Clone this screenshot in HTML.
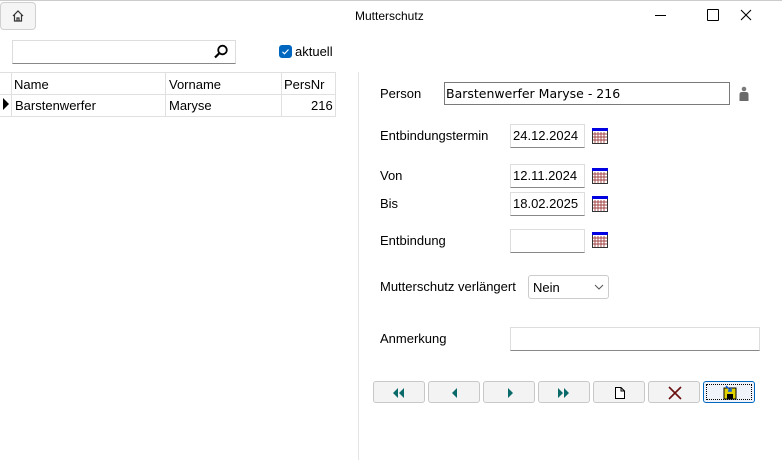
<!DOCTYPE html>
<html><head><style>
body{margin:0;width:782px;height:460px;background:#fff;font-family:"Liberation Sans",sans-serif;font-size:13px;color:#000;position:relative;overflow:hidden}
.a{position:absolute}
.lbl{position:absolute;font-size:13px}
.tb{position:absolute;border:1px solid #ddd;border-bottom:1px solid #888;background:#fff;box-sizing:border-box;font-size:13px;padding:3px 2px}
.cal{position:absolute;width:16px;height:16px}
.btn{position:absolute;top:381px;width:52px;height:22px;border:1px solid #c8c8c8;border-radius:3px;background:#f3f3f3;box-sizing:border-box}
.btn svg{position:absolute;left:0;top:0}
</style></head><body>
<div class="a" style="left:0;top:0;width:782px;height:1px;background:#ccc"></div>
<div class="a" style="left:0;top:2px;width:36px;height:28px;border:1px solid #d0d0d0;border-radius:4px;background:#f5f5f5;box-sizing:border-box"></div>
<svg class="a" style="left:11px;top:9px" width="14" height="14" viewBox="0 0 14 14"><path d="M2 7 L7 2 L12 7 M3.5 5.5 V12 H10.5 V5.5 M6 12 V9 H8 V12" fill="none" stroke="#333" stroke-width="1.2"/></svg>
<div class="lbl" style="left:355px;top:9px;font-size:12px">Mutterschutz</div>
<div class="a" style="left:655px;top:15px;width:11px;height:1px;background:#000"></div>
<div class="a" style="left:707px;top:9px;width:10px;height:10px;border:1px solid #000;border-radius:1px"></div>
<svg class="a" style="left:740px;top:9px" width="12" height="12"><path d="M1 1L11 11M11 1L1 11" stroke="#000" stroke-width="1.1"/></svg>

<div class="a" style="left:12px;top:40px;width:224px;height:24px;border:1px solid #ddd;border-bottom:1px solid #888;box-sizing:border-box"></div>
<svg class="a" style="left:213px;top:44px" width="16" height="16"><circle cx="9.5" cy="6" r="4.3" fill="none" stroke="#000" stroke-width="1.8"/><path d="M6.5 9L2 13.5" stroke="#000" stroke-width="2.2"/></svg>
<div class="a" style="left:279px;top:45px;width:13px;height:13px;background:#0067c0;border-radius:3px"></div>
<svg class="a" style="left:279px;top:45px" width="13" height="13"><path d="M3.5 6.8L5.5 8.8L9.5 4.5" fill="none" stroke="#fff" stroke-width="1.1"/></svg>
<div class="lbl" style="left:295px;top:44px">aktuell</div>

<div class="a" style="left:0;top:72px;width:336px;height:44px;border-top:1px solid #e0e0e0"></div>
<div class="a" style="left:0;top:94px;width:336px;height:1px;background:#e0e0e0"></div>
<div class="a" style="left:0;top:116px;width:336px;height:1px;background:#e0e0e0"></div>
<div class="a" style="left:11px;top:72px;width:1px;height:44px;background:#e0e0e0"></div>
<div class="a" style="left:165px;top:72px;width:1px;height:44px;background:#e0e0e0"></div>
<div class="a" style="left:281px;top:72px;width:1px;height:44px;background:#e0e0e0"></div>
<div class="a" style="left:335px;top:72px;width:1px;height:44px;background:#e0e0e0"></div>
<div class="lbl" style="left:14px;top:77px">Name</div>
<div class="lbl" style="left:169px;top:77px">Vorname</div>
<div class="lbl" style="left:284px;top:77px">PersNr</div>
<svg class="a" style="left:3px;top:98px" width="6" height="12"><path d="M0 0L6 6L0 12Z" fill="#000"/></svg>
<div class="lbl" style="left:15px;top:98px">Barstenwerfer</div>
<div class="lbl" style="left:169px;top:98px">Maryse</div>
<div class="lbl" style="left:311px;top:98px">216</div>
<div class="a" style="left:358px;top:72px;width:1px;height:388px;background:#e4e4e4"></div>

<div class="lbl" style="left:380px;top:86px">Person</div>
<div class="a" style="left:444px;top:82px;width:286px;height:23px;border:1px solid #7a7a7a;box-sizing:border-box;padding:3px 1px;font-family:'DejaVu Sans',sans-serif;font-size:12.5px">Barstenwerfer Maryse - 216</div>
<svg class="a" style="left:737px;top:86px" width="14" height="16"><circle cx="7" cy="3" r="2.3" fill="#7a7a7a"/><path d="M2.5 15V8.5Q2.5 6 5 6H9Q11.5 6 11.5 8.5V15Z" fill="#6a6a6a"/></svg>

<div class="lbl" style="left:380px;top:128px">Entbindungstermin</div>
<div class="tb" style="left:510px;top:124px;width:75px;height:24px">24.12.2024</div>
<div class="lbl" style="left:380px;top:168px">Von</div>
<div class="tb" style="left:510px;top:164px;width:75px;height:24px">12.11.2024</div>
<div class="lbl" style="left:380px;top:196px">Bis</div>
<div class="tb" style="left:510px;top:192px;width:75px;height:24px">18.02.2025</div>
<div class="lbl" style="left:380px;top:233px">Entbindung</div>
<div class="tb" style="left:510px;top:229px;width:75px;height:24px"></div>

<svg width="0" height="0" style="position:absolute"><defs><g id="c"><rect x="0.5" y="0.5" width="15" height="15" fill="#fff" stroke="#333"/><rect x="0" y="0" width="16" height="3" fill="#0000e0"/><path d="M3 4V15M6 4V15M9 4V15M12 4V15M1 6H15M1 9H15M1 12H15" stroke="#a04040" stroke-width="0.9"/></g></defs></svg>
<svg class="cal" style="left:592px;top:128px" width="16" height="16"><use href="#c"/></svg>
<svg class="cal" style="left:592px;top:168px" width="16" height="16"><use href="#c"/></svg>
<svg class="cal" style="left:592px;top:196px" width="16" height="16"><use href="#c"/></svg>
<svg class="cal" style="left:592px;top:232px" width="16" height="16"><use href="#c"/></svg>

<div class="lbl" style="left:380px;top:279px">Mutterschutz verlängert</div>
<div class="a" style="left:528px;top:275px;width:81px;height:24px;border:1px solid #ccc;border-radius:3px;box-sizing:border-box;padding:4px 4px;font-size:13px">Nein</div>
<svg class="a" style="left:594px;top:284px" width="10" height="6"><path d="M1 1L5 5L9 1" fill="none" stroke="#555"/></svg>

<div class="lbl" style="left:380px;top:331px">Anmerkung</div>
<div class="tb" style="left:510px;top:327px;width:250px;height:24px"></div>

<div class="btn" style="left:373px"><svg width="52" height="22"><path d="M19 11L24 6V16ZM25 11L30 6V16Z" fill="#0a6a6a"/></svg></div>
<div class="btn" style="left:428px"><svg width="52" height="22"><path d="M23 11L28 6V16Z" fill="#0a6a6a"/></svg></div>
<div class="btn" style="left:483px"><svg width="52" height="22"><path d="M24 6L29 11L24 16Z" fill="#0a6a6a"/></svg></div>
<div class="btn" style="left:538px"><svg width="52" height="22"><path d="M19 6L24 11L19 16ZM25 6L30 11L25 16Z" fill="#0a6a6a"/></svg></div>
<div class="btn" style="left:593px"><svg width="52" height="22"><path d="M21.5 5.5H27L30.5 9V16.5H21.5ZM27 5.5V9H30.5" fill="#fff" stroke="#000"/></svg></div>
<div class="btn" style="left:648px"><svg width="52" height="22"><path d="M20 5L32 17M32 5L20 17" stroke="#6a1010" stroke-width="1.6"/></svg></div>
<div class="btn" style="left:703px;border:1px solid #0067c0;background:#f0f4fa"><div style="position:absolute;left:2px;top:2px;right:2px;bottom:2px;border:1px dotted #000"></div><svg width="52" height="22"><rect x="20" y="6" width="12" height="11" fill="#e0d000" stroke="#000"/><rect x="23" y="12" width="6" height="5" fill="#000"/><path d="M22 4L27 9M27 6V9H24" stroke="#1060e0" stroke-width="1.5" fill="none"/></svg></div>
</body></html>
